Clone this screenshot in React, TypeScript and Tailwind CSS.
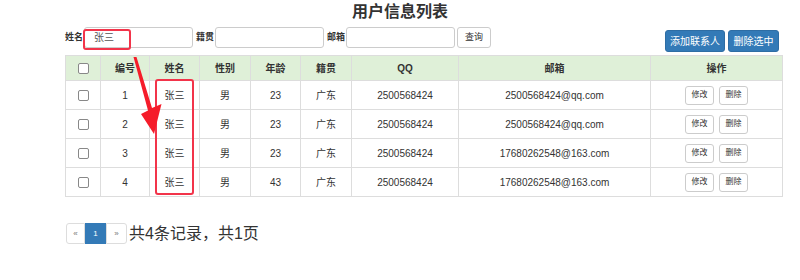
const users = [
  { id: 1, name: '张三', sex: '男', age: 23, home: '广东', qq: '2500568424', email: '2500568424@qq.com' },
  { id: 2, name: '张三', sex: '男', age: 23, home: '广东', qq: '2500568424', email: '2500568424@qq.com' },
  { id: 3, name: '张三', sex: '男', age: 23, home: '广东', qq: '2500568424', email: '17680262548@163.com' },
  { id: 4, name: '张三', sex: '男', age: 43, home: '广东', qq: '2500568424', email: '17680262548@163.com' },
];

const font = "font-['Liberation_Sans','Noto_Sans_CJK_SC',sans-serif]";

function CheckBox() {
  return <span className="inline-block w-[11px] h-[11px] border border-[#888] rounded-[2px] bg-white align-middle" />;
}

function Field({ label, children }: { label: string; children?: React.ReactNode }) {
  return (
    <div className="flex items-center">
      <span className="w-[17px] whitespace-nowrap text-[9px] font-bold mr-[2px]">{label}</span>
      <div className="w-[109px] h-[21px] border border-[#ccc] rounded-[3px] bg-white flex items-center pl-[9px] text-[10px] text-[#555]">
        {children}
      </div>
    </div>
  );
}

export default function App() {
  const th = 'border border-[#ddd] text-[10px] font-bold text-center';
  const td = 'border border-[#ddd] text-[10px] text-center';

  return (
    <div className={`relative w-[800px] h-[280px] bg-white text-[#333] ${font}`}>
      {/* Title */}
      <h1 className="mt-[2px] h-[20px] leading-[20px] text-center text-[16px] font-bold">用户信息列表</h1>

      {/* Search + actions */}
      <div className="mt-[5px] flex justify-between pl-[65px] pr-[21px]">
        <div className="flex items-center gap-[3px] h-[21px]">
          <Field label="姓名">张三</Field>
          <Field label="籍贯" />
          <Field label="邮箱" />
          <button className="ml-[-1px] h-[21px] w-[34px] border border-[#ccc] rounded-[3px] bg-white text-[9px] text-[#333]">查询</button>
        </div>
        <div className="flex gap-[3px] mt-[3px]">
          <button className="h-[22px] w-[60px] rounded-[3px] bg-[#337ab7] border border-[#2e6da4] text-white text-[10px]">添加联系人</button>
          <button className="h-[22px] w-[51px] rounded-[3px] bg-[#337ab7] border border-[#2e6da4] text-white text-[10px]">删除选中</button>
        </div>
      </div>

      {/* Table */}
      <table className="mt-[3px] ml-[65px] w-[717px] table-fixed border-collapse">
        <colgroup>
          <col className="w-[35px]" />
          <col className="w-[49px]" />
          <col className="w-[50px]" />
          <col className="w-[51px]" />
          <col className="w-[50px]" />
          <col className="w-[51px]" />
          <col className="w-[107px]" />
          <col className="w-[192px]" />
          <col className="w-[132px]" />
        </colgroup>
        <thead>
          <tr className="h-[25px] bg-[#dff0d8]">
            <th className={th}><CheckBox /></th>
            <th className={th}>编号</th>
            <th className={th}>姓名</th>
            <th className={th}>性别</th>
            <th className={th}>年龄</th>
            <th className={th}>籍贯</th>
            <th className={th}>QQ</th>
            <th className={th}>邮箱</th>
            <th className={th}>操作</th>
          </tr>
        </thead>
        <tbody>
          {users.map((u) => (
            <tr key={u.id} className="h-[29px]">
              <td className={td}><CheckBox /></td>
              <td className={td}>{u.id}</td>
              <td className={td}>{u.name}</td>
              <td className={td}>{u.sex}</td>
              <td className={td}>{u.age}</td>
              <td className={td}>{u.home}</td>
              <td className={td}>{u.qq}</td>
              <td className={td}>{u.email}</td>
              <td className={td}>
                <div className="flex justify-center gap-[5px]">
                  <button className="w-[29px] h-[19px] border border-[#ccc] rounded-[3px] bg-white text-[8px]">修改</button>
                  <button className="w-[29px] h-[19px] border border-[#ccc] rounded-[3px] bg-white text-[8px]">删除</button>
                </div>
              </td>
            </tr>
          ))}
        </tbody>
      </table>

      {/* Pagination */}
      <div className="mt-[26px] ml-[66px] flex items-center">
        <div className="flex h-[21px]">
          <span className="w-[19px] border border-[#ddd] rounded-l-[3px] flex items-center justify-center text-[8px] text-[#777]">«</span>
          <span className="w-[21px] bg-[#337ab7] border border-[#337ab7] flex items-center justify-center text-[8px] text-white">1</span>
          <span className="w-[21px] border border-[#ddd] rounded-r-[3px] flex items-center justify-center text-[8px] text-[#777]">»</span>
        </div>
        <span className="ml-[2px] text-[16px] leading-[21px]">共4条记录，共1页</span>
      </div>

      {/* Red annotations */}
      <div className="absolute left-[83px] top-[27px] w-[48px] h-[21px] border-2 border-[#f2344a] rounded-[3px]" />
      <div className="absolute left-[155px] top-[77px] w-[39px] h-[116px] border-2 border-[#f2344a] rounded-[3px]" />
      <svg className="absolute left-0 top-0 pointer-events-none" width="800" height="280">
        <polygon points="133.5,55 136.5,55 152,106 161.5,102 154,132 141,112 148,108.5" fill="#f51c2a" />
      </svg>
    </div>
  );
}
